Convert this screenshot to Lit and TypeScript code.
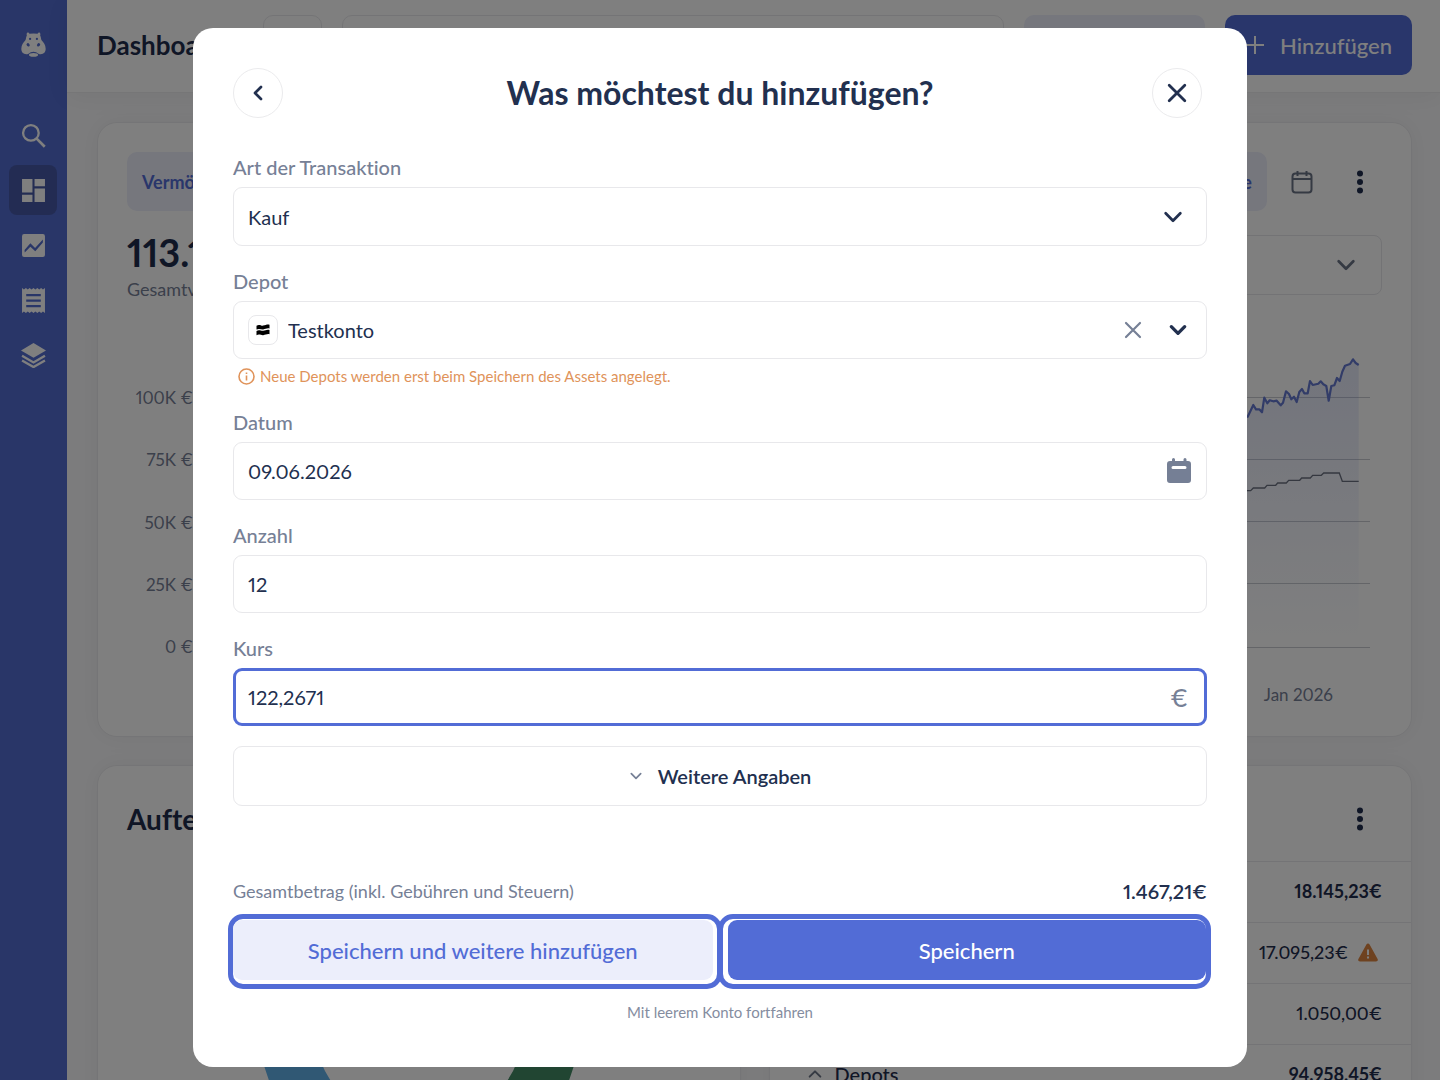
import { LitElement, html, css, svg } from "lit";
import { customElement } from "lit/decorators.js";

const chevron = (open = false) => svg`<path d=${open ? "M4 16l8-8 8 8" : "M4 8l8 8 8-8"} fill="none" stroke="currentColor" stroke-linecap="round" stroke-linejoin="round"/>`;

const navIcons = [
  { label: "Suche", shape: svg`<circle cx="9.5" cy="9.5" r="7.5" fill="none" stroke="currentColor" stroke-width="2.2"/><path d="M14.8 14.8l8 8" stroke="currentColor" stroke-width="2.6" fill="none"/>` },
  { label: "Übersicht", shape: svg`<path d="M1 1h10v13H1zM13 1h10v7H13zM1 16h10v7H1zM13 10h10v13H13z"/>` },
  { label: "Analyse", shape: svg`<path fill-rule="evenodd" d="M3 1h18a2 2 0 0 1 2 2v18a2 2 0 0 1-2 2H3a2 2 0 0 1-2-2V3a2 2 0 0 1 2-2zM3.6 18.8L9 13.2l4.7 4.2L21 9V6.200L13.500 14.3 9 9.8l-5.600 6.400z"/>` },
  { label: "Transaktionen", shape: svg`<path fill-rule="evenodd" d="M1 0l1.800 1.500L4.700 0l1.800 1.500L8.300 0l1.800 1.500L12 0l1.800 1.500L15.700 0l1.800 1.500L19.300 0l1.800 1.500L23 0v24l-1.900-1.500L19.300 24l-1.800-1.500-1.800 1.500-1.900-1.500L12 24l-1.900-1.500L8.300 24l-1.800-1.500L4.700 24l-1.900-1.500L1 24zM5 5.800v2.200h14V5.800zM5 11v2.200h14V11zM5 16.200v2.200h14v-2.200z"/>` },
  { label: "Depots", shape: svg`<path d="M12 0l12 7.200-12 7L0 7.200z"/><path d="M1 12.300l11 6.300 11-6.300M1 16.800l11 6.300 11-6.300" fill="none" stroke="currentColor" stroke-width="2.200"/>` },
];

const axisLabels = ["100K €", "75K €", "50K €", "25K €", "0 €"];
const gridLines = [397, 459, 521, 583, 647];
const wealth =
  "202,610 600,520 1000,450 1247.700,416.700 1253.300,405 1256,409.300 1259.300,409.300 1262,412.300 1264.300,397.700 1267.300,403.300 1269.700,400.300 1273.300,401.300 1276.700,400.700 1280.700,405.300 1283,402.700 1286,391.300 1289,394 1291.300,399.300 1294,396.700 1296.700,402 1299.300,392 1302,389 1304.300,393.300 1307.700,393.300 1310,381 1312.700,385 1318.300,383.700 1320.700,381.300 1323.300,384.300 1326.300,386 1328.700,400.700 1331.300,386 1334.300,385.300 1337,378 1339.700,381 1342.300,371.700 1345,365.700 1350,364 1353,359.300 1355.700,363 1358.700,365";
const invested =
  "202,620 1000,520 1247.700,490.700 1250.700,490.700 1253.300,488 1264.700,488 1267,485.300 1275.700,485.300 1277.700,483 1286.300,483 1288.700,480.300 1299.700,480.300 1301.700,478 1310.300,478 1312.700,475.300 1321.300,475.300 1323.700,473 1339.300,473 1342.300,481.300 1358.700,481.300";

const dots = html`<svg class="dots" viewBox="0 0 8 24" aria-hidden="true"><circle cx="4" cy="3.500" r="3"/><circle cx="4" cy="12" r="3"/><circle cx="4" cy="20.500" r="3"/></svg>`;

@customElement("wealth-dashboard")
export class WealthDashboard extends LitElement {
  static styles = css`
    :host { display: grid; grid-template-columns: 67px minmax(0, 1fr); height: 100%; color: #1f2c4d; background: #f9f9fb; }
    * { box-sizing: border-box; }
    svg { display: block; fill: currentColor; }
    button { font: inherit; font-variant: inherit; color: inherit; border: 0; background: none; padding: 0; }
    h1, h2, p { margin: 0; }
    .side { background: #526cd0; color: #fff; display: flex; flex-direction: column; align-items: center; padding: 32px 1px 20px 0; }
    .side .hippo { width: 25px; height: 25px; }
    .nav { display: flex; flex-direction: column; gap: 5px; margin: 53px 0 auto; }
    .item { width: 48px; height: 50px; display: grid; place-items: center; border-radius: 8px; }
    .item.active { background: #4659a6; }
    .item svg { width: 25px; height: 25px; }
    .user { width: 24px; height: 26px; }
    .top { display: flex; align-items: center; gap: 20px; height: 93px; padding: 15px 28px 17px 30px; background: #fff; border-bottom: 1px solid #ececef; box-shadow: 0 4px 24px rgba(0, 0, 0, 0.05); }
    .top h1 { width: 146px; font-size: 26px; line-height: 60px; font-weight: 700; }
    .square { width: 59px; height: 60px; border: 1px solid #e9e9ec; border-radius: 10px; }
    .find { flex: 1; min-width: 0; height: 60px; border: 1px solid #e9e9ec; border-radius: 10px; }
    .soft { width: 181px; height: 60px; border-radius: 10px; background: #eceefb; }
    .add { width: 187px; height: 60px; border-radius: 10px; background: #526cd6; color: #fff; font-size: 22px; font-weight: 500; display: flex; align-items: center; justify-content: flex-end; gap: 16px; padding-right: 20px; }
    .add svg { width: 18px; height: 18px; }
    .body { padding: 29px 28px 0 30px; display: grid; gap: 28px; }
    .card { background: #fff; border: 1px solid #ebebee; border-radius: 20px; box-shadow: 0 0 24px rgba(0, 0, 0, 0.05); min-width: 0; }
    .chart-card { padding: 29px; }
    .tabs { display: flex; align-items: center; }
    .tab { height: 59px; padding: 0 15px; border-radius: 10px; background: #eceefb; color: #526cd6; font-size: 18px; font-weight: 700; }
    .tab.last { margin-left: auto; }
    .cal { width: 24px; height: 24px; margin: 0 42px 0 23px; color: #6b7486; }
    .dots { width: 8px; height: 24px; margin-right: 18px; }
    .sum { display: flex; justify-content: space-between; margin-top: 16px; }
    .big { font-size: 38px; line-height: 50px; font-weight: 700; }
    .muted { font-size: 18px; line-height: 25px; color: #768096; }
    .pick { width: 300px; height: 60px; margin-top: 8px; border: 1px solid #e6e6ea; border-radius: 8px; display: flex; align-items: center; justify-content: flex-end; padding-right: 24px; color: #6b7486; }
    .pick svg { width: 22px; height: 22px; stroke-width: 3; }
    .plot { display: flex; gap: 9px; margin: 84px 12px 0 0; }
    .axis { flex: 0 0 66px; display: flex; flex-direction: column; justify-content: space-between; text-align: right; font-size: 17px; line-height: 24px; color: #768096; white-space: nowrap; }
    .plot svg { flex: 1; min-width: 0; height: 273px; overflow: visible; }
    .months { margin-top: 24px; padding-right: 49px; text-align: right; font-size: 17px; line-height: 24px; color: #768096; }
    .pair { display: grid; grid-template-columns: 1fr 1fr; gap: 28px; }
    .head { display: flex; align-items: center; justify-content: space-between; height: 95px; padding: 10px 29px 0; }
    h2 { font-size: 28px; line-height: 40px; font-weight: 700; }
    .donut { width: 322px; height: 322px; margin: 0 auto; }
    table { width: 100%; border-collapse: collapse; font-size: 18px; font-weight: 500; }
    td { height: 61px; padding: 0 29px 2px; border-top: 1px solid #e9e9ec; }
    td:last-child { text-align: right; }
    .strong { font-weight: 700; }
    .inline { display: inline-flex; align-items: center; gap: 10px; }
    .row-name { display: flex; align-items: center; gap: 12px; font-size: 20px; padding-left: 8px; }
    .row-name svg { width: 16px; height: 16px; color: #6b7486; stroke-width: 3; }
    .warn { width: 20px; height: 19px; margin-right: 4px; color: #dd8540; }
  `;

  render() {
    return html`
      <nav class="side" aria-label="Navigation">
        <svg class="hippo" viewBox="60 96 77 76" aria-hidden="true">
          <path d="M78 106C75 97 83 94 86 101Q98 99 111 101C114 94 122 97 119 106C122 111 121 117 124 122C129 128 136 135 136 147C136 159 128 166 115 163Q98 149 82 163C69 166 61 159 61 147C61 135 68 128 73 122C76 117 75 111 78 106z"/>
          <ellipse cx="98.500" cy="166" rx="14" ry="5.500"/>
          <g fill="#526cd0"><circle cx="88" cy="117" r="3.500"/><circle cx="109" cy="117" r="3.500"/><ellipse cx="82" cy="135" rx="4.500" ry="5.500" transform="rotate(-40 82 135)"/><ellipse cx="114" cy="135" rx="4.500" ry="5.500" transform="rotate(40 114 135)"/></g>
        </svg>
        <div class="nav">
          ${navIcons.map((n, i) => html`<button class="item ${i === 1 ? "active" : ""}" aria-label=${n.label}><svg viewBox="0 0 24 24">${n.shape}</svg></button>`)}
        </div>
        <button aria-label="Profil"><svg class="user" viewBox="0 0 24 26"><circle cx="12" cy="6.500" r="6.300"/><path d="M1 26v-2.500C1 18.500 4.500 15 9 15h6c4.500 0 8 3.500 8 8.500V26z"/></svg></button>
      </nav>
      <div>
        <header class="top">
          <h1>Dashboard</h1>
          <div class="square"></div><div class="find"></div><div class="soft"></div>
          <button class="add"><svg viewBox="0 0 18 18"><path d="M9 0v18M0 9h18" stroke="currentColor" stroke-width="2"/></svg>Hinzufügen</button>
        </header>
        <main class="body">
          <section class="card chart-card">
            <div class="tabs">
              <button class="tab">Vermögen</button>
              <button class="tab last">Performance</button>
              <svg class="cal" viewBox="0 0 24 24"><g fill="none" stroke="currentColor" stroke-width="2"><rect x="2.500" y="3.500" width="19" height="19" rx="3"/><path d="M2.500 9h19M7.500 1v5M16.500 1v5"/></g></svg>
              ${dots}
            </div>
            <div class="sum">
              <div><p class="big">113.103,68 €</p><p class="muted">Gesamtvermögen</p></div>
              <button class="pick" aria-label="Zeitraum"><svg viewBox="0 0 24 24">${chevron()}</svg></button>
            </div>
            <div class="plot">
              <div class="axis">${axisLabels.map((l) => html`<span>${l}</span>`)}</div>
              <svg viewBox="202 386 1168 273" preserveAspectRatio="none" aria-hidden="true">
                <defs><linearGradient id="fade" x1="0" y1="0" x2="0" y2="1"><stop offset="0" stop-color="#526cd6" stop-opacity="0.150"/><stop offset="1" stop-color="#526cd6" stop-opacity="0"/></linearGradient></defs>
                ${gridLines.map((y) => svg`<path d="M202 ${y}.5H1370" stroke="#c9cbd1" fill="none"/>`)}
                <polygon points="${wealth} 1358.700,647 202,647" fill="url(#fade)"/>
                <polyline points=${invested} fill="none" stroke="#6b7180" stroke-width="1.300"/>
                <polyline points=${wealth} fill="none" stroke="#6478d0" stroke-width="2.200" stroke-linejoin="round"/>
              </svg>
            </div>
            <p class="months">Jan 2026</p>
          </section>
          <div class="pair">
            <section class="card">
              <div class="head"><h2>Aufteilung</h2></div>
              <svg class="donut" viewBox="-161 -161 322 322" aria-hidden="true"><g fill="none" stroke-width="55"><path d="M0 133.500A133.500 133.500 0 0 1 0 -133.500" stroke="#61b0e8"/><path d="M0 -133.500A133.500 133.500 0 0 1 0 133.500" stroke="#438a65"/></g></svg>
            </section>
            <section class="card">
              <div class="head"><span></span>${dots}</div>
              <table>
                <tr><td></td><td class="strong">18.145,23€</td></tr>
                <tr><td></td><td><span class="inline">17.095,23€<svg class="warn" viewBox="0 0 20 19"><path d="M8.400 1.500c.700-1.200 2.500-1.200 3.200 0l8 14.500c.700 1.200-.200 2.500-1.600 2.500H2C.600 18.500-.300 17.200.400 16z"/><path d="M9 6.500h2v5.500H9zM9 13.500h2v2H9z" fill="#fff"/></svg></span></td></tr>
                <tr><td></td><td>1.050,00€</td></tr>
                <tr><td><span class="row-name"><svg viewBox="0 0 24 24">${chevron(true)}</svg>Depots</span></td><td class="strong">94.958,45€</td></tr>
              </table>
            </section>
          </div>
        </main>
      </div>
    `;
  }
}

@customElement("transaction-dialog")
export class TransactionDialog extends LitElement {
  static styles = css`
    :host { display: block; width: 100%; max-width: 1054px; color: #22304f; }
    * { box-sizing: border-box; }
    svg { display: block; fill: currentColor; }
    button, input, select { font: inherit; font-variant: inherit; color: inherit; margin: 0; padding: 0; border: 0; background: none; outline: 0; }
    h1, p { margin: 0; }
    .dialog { background: #fff; border-radius: 20px; padding: 40px 40px 45px; }
    .head { display: grid; grid-template-columns: 1fr auto 1fr; align-items: center; margin-bottom: 38px; }
    h1 { font-size: 32px; line-height: 50px; font-weight: 700; }
    .round { width: 50px; height: 50px; border: 1px solid #ebebed; border-radius: 50%; display: grid; place-items: center; }
    .close { justify-self: end; margin-right: 5px; }
    .round svg { width: 20px; height: 20px; }
    .form { display: grid; gap: 24px; }
    label { display: block; margin-bottom: 9px; font-size: 20px; line-height: 22px; font-weight: 500; color: #768096; }
    .field { display: flex; align-items: center; height: 58px; padding: 0 14px; border: 1px solid #e8e8eb; border-radius: 9px; font-size: 20px; position: relative; }
    .field.focus { border: 3px solid #526cd6; padding: 0 12px; }
    input, select { flex: 1; min-width: 0; height: 100%; appearance: none; }
    .field.pick { height: 59px; padding: 0; }
    .pick select { padding: 0 60px 0 14px; }
    .pick svg { position: absolute; right: 22px; pointer-events: none; }
    .arrow { width: 22px; height: 22px; stroke-width: 3; }
    .arrow.bold { width: 20px; height: 20px; stroke-width: 4; }
    .bank { width: 30px; height: 30px; margin-right: 10px; border: 1px solid #e8e8eb; border-radius: 8px; display: grid; place-items: center; color: #000; }
    .bank svg { width: 14px; height: 12px; }
    .clear { color: #768096; margin-right: 26px; }
    .clear svg { width: 18px; height: 18px; }
    .open { margin-right: 4px; }
    .date svg { width: 26px; height: 26px; color: #757f95; }
    .unit { font-size: 24px; font-weight: 500; color: #768096; padding-right: 4px; }
    .hint { display: flex; align-items: center; gap: 5px; padding: 6px 5px 0; font-size: 15px; line-height: 22px; color: #e0935a; }
    .hint svg { width: 17px; height: 17px; }
    .more { width: 100%; height: 60px; margin-top: 20px; border: 1px solid #e8e8eb; border-radius: 9px; display: flex; align-items: center; justify-content: center; gap: 15px; font-size: 20px; font-weight: 600; }
    .more svg { width: 14px; height: 14px; color: #768096; stroke-width: 3; }
    .total { display: flex; justify-content: space-between; align-items: center; margin: 72px 0 10px; line-height: 26px; }
    .total span { font-size: 18px; color: #768096; }
    .total strong { font-size: 20px; font-weight: 600; }
    .actions { display: grid; grid-template-columns: 1fr 1fr; margin: 0 -4px 0 -5px; }
    .ring { height: 75px; border: 5px solid #526cd6; border-radius: 15px; display: flex; font-size: 22px; font-weight: 500; }
    .ring span { flex: 1; height: 60px; border-radius: 9px; display: grid; place-items: center; }
    .ring.second { padding: 1px 4px 4px 0; margin-right: -2px; color: #526cd6; }
    .ring.second span { background: #eceefb; }
    .ring.main { padding: 1px 0 4px 5px; margin-left: -2px; color: #fff; }
    .ring.main span { background: #526cd6; }
    .skip { display: block; width: fit-content; margin: 13px auto 0; font-size: 15px; line-height: 20px; color: #858d9f; text-decoration: none; }
  `;

  render() {
    return html`
      <div class="dialog" role="dialog" aria-modal="true" aria-labelledby="title">
        <div class="head">
          <button class="round" aria-label="Zurück"><svg viewBox="0 0 20 20"><path d="M13 4l-6 6 6 6" fill="none" stroke="currentColor" stroke-width="2.700" stroke-linecap="round" stroke-linejoin="round"/></svg></button>
          <h1 id="title">Was möchtest du hinzufügen?</h1>
          <button class="round close" aria-label="Schließen"><svg viewBox="0 0 20 20"><path d="M2.200 2.200l15.600 15.600M17.800 2.200L2.200 17.800" fill="none" stroke="currentColor" stroke-width="2.800" stroke-linecap="round"/></svg></button>
        </div>
        <form class="form">
          <div>
            <label for="type">Art der Transaktion</label>
            <div class="field pick"><select id="type"><option>Kauf</option></select><svg class="arrow" viewBox="0 0 24 24">${chevron()}</svg></div>
          </div>
          <div>
            <label for="depot">Depot</label>
            <div class="field">
              <span class="bank"><svg viewBox="0 0 14 12"><path d="M.500 1.800C3-.300 5 2 7.200 1.600 9.500 1.200 11 .200 13.500.700v3.800c-2.500-.600-4 .600-6.300.900C5 5.600 3 4 .500 5.600zM.500 7C3 5 5 7.100 7.200 6.800c2.300-.300 3.800-1.500 6.300-.800v4.200c-2.500-.500-4 .800-6.300 1C5 11.400 3 9.500.500 11.300z"/></svg></span>
              <input id="depot" value="Testkonto" />
              <button type="button" class="clear" aria-label="Leeren"><svg viewBox="0 0 18 18"><path d="M2 2l14 14M16 2L2 16" fill="none" stroke="currentColor" stroke-width="2.200" stroke-linecap="round"/></svg></button>
              <button type="button" class="open" aria-label="Öffnen"><svg class="arrow bold" viewBox="0 0 24 24">${chevron()}</svg></button>
            </div>
            <p class="hint"><svg viewBox="0 0 17 17"><circle cx="8.500" cy="8.500" r="7.500" fill="none" stroke="currentColor" stroke-width="1.600"/><path d="M7.700 7.500h1.600v5H7.700zM7.700 4.500h1.600v1.600H7.700z"/></svg>Neue Depots werden erst beim Speichern des Assets angelegt.</p>
          </div>
          <div>
            <label for="date">Datum</label>
            <div class="field date"><input id="date" value="09.06.2026" /><svg viewBox="0 0 26 26"><path fill-rule="evenodd" d="M6 1.500a1.500 1.500 0 0 1 3 0V3h8.500V1.500a1.500 1.500 0 0 1 3 0V3H22a3 3 0 0 1 3 3v16a3 3 0 0 1-3 3H4a3 3 0 0 1-3-3V6a3 3 0 0 1 3-3h2zM7 8a1.500 1.500 0 0 0 0 3h12a1.500 1.500 0 0 0 0-3z"/></svg></div>
          </div>
          <div>
            <label for="count">Anzahl</label>
            <div class="field"><input id="count" value="12" /></div>
          </div>
          <div>
            <label for="price">Kurs</label>
            <div class="field focus"><input id="price" value="122,2671" /><span class="unit">€</span></div>
          </div>
        </form>
        <button class="more"><svg viewBox="0 0 24 24">${chevron()}</svg>Weitere Angaben</button>
        <div class="total"><span>Gesamtbetrag (inkl. Gebühren und Steuern)</span><strong>1.467,21€</strong></div>
        <div class="actions">
          <button class="ring second"><span>Speichern und weitere hinzufügen</span></button>
          <button class="ring main"><span>Speichern</span></button>
        </div>
        <a class="skip" href="#">Mit leerem Konto fortfahren</a>
      </div>
    `;
  }
}

@customElement("app-root")
export class AppRoot extends LitElement {
  static styles = css`
    :host { display: block; height: 100vh; overflow: hidden; font-family: Lato, "Open Sans", sans-serif; font-variant-numeric: proportional-nums; font-variant-ligatures: no-common-ligatures; }
    .overlay { position: fixed; inset: 0; background: rgba(0, 0, 0, 0.5); display: flex; justify-content: center; align-items: flex-start; padding: 28px 24px; overflow: hidden; }
  `;

  render() {
    return html`<wealth-dashboard></wealth-dashboard><div class="overlay"><transaction-dialog></transaction-dialog></div>`;
  }
}
